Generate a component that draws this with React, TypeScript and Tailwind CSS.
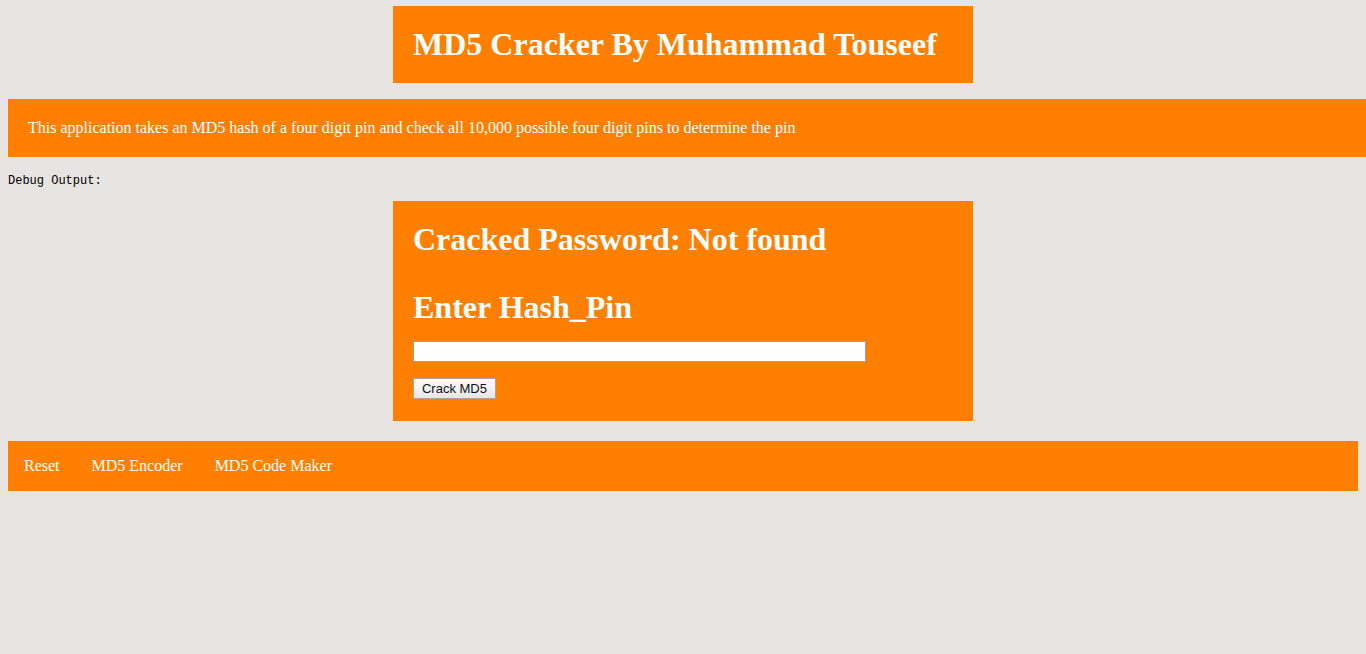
export default function App() {
  return (
    <div className="min-h-screen overflow-hidden bg-[#e8e4e3] font-['Liberation_Serif',serif] pt-[6px]">
      <div className="mx-auto flex h-[77px] w-[580px] items-center bg-[#ff8000] px-5">
        <h1 className="text-[32px] font-bold leading-[37px] text-white">MD5 Cracker By Muhammad Touseef</h1>
      </div>

      <div className="ml-2 mt-4 flex h-[58px] items-center bg-[#ff8000] pl-5">
        <p className="text-[16px] text-white">
          This application takes an MD5 hash of a four digit pin and check all 10,000 possible four digit pins to determine the pin
        </p>
      </div>

      <pre className="ml-2 mt-[17px] font-['Liberation_Mono',monospace] text-[12px] leading-[14px] text-black">Debug Output:</pre>

      <div className="mx-auto mt-[13px] w-[580px] bg-[#ff8000] px-5 pb-[22px] pt-5">
        <h2 className="text-[32px] font-bold leading-[36px] text-white">Cracked Password: Not found</h2>
        <h2 className="mt-[32px] text-[32px] font-bold leading-[36px] text-white">Enter Hash_Pin</h2>
        <input
          type="text"
          className="mt-4 block h-[21px] w-[453px] border border-[#a0a0a0] bg-white px-1 font-['Liberation_Sans',sans-serif] text-[13px]"
        />
        <button className="mt-4 block h-[21px] w-[83px] border border-[#a6a6a6] bg-gradient-to-b from-[#fdfdfd] to-[#e6e6e6] font-['Liberation_Sans',sans-serif] text-[13px] leading-none text-[#111]">
          Crack MD5
        </button>
      </div>

      <nav className="mx-2 mt-5 flex h-[50px] items-center gap-8 bg-[#ff8000] px-4 text-[16px] text-white">
        <a href="#">Reset</a>
        <a href="#">MD5 Encoder</a>
        <a href="#">MD5 Code Maker</a>
      </nav>
    </div>
  );
}
